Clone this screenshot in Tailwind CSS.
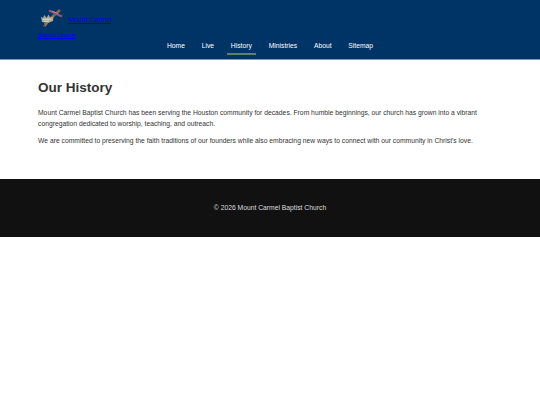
<!DOCTYPE html>
<html lang="en">
<head>
  <meta charset="UTF-8">
  <meta name="viewport" content="width=device-width, initial-scale=1.0">
  <title>Our History - Mount Carmel Baptist Church</title>
  <script src="https://cdn.jsdelivr.net/npm/@tailwindcss/browser@4"></script>
</head>
<body class="bg-white font-['Liberation_Sans',Arial,sans-serif] text-[6.75px] leading-[11px] text-[#333333]">
  <!-- Header -->
  <header class="h-[60px] border-b border-[#7f99b2] bg-[#003366]">
    <div class="mx-auto w-[464px] pt-[6px]">
      <a href="#" class="block h-[33px] text-[#0000ee]">
        <span class="flex h-[25px] items-center">
          <svg class="h-[25px] w-[30px] shrink-0" viewBox="0 0 30 25" fill="none">
            <path d="M5.5 20.5 13 12.5" stroke="#6e4a3c" stroke-width="2"/>
            <path d="M13 12 22 4" stroke="#8d6452" stroke-width="2.4"/>
            <path d="M11 4.5 24 10.5" stroke="#90577a" stroke-width="2.4"/>
            <path d="M14 5 20 7.5" stroke="#b98a92" stroke-width="1"/>
            <path d="M3 10.5 5 12 6.5 9 8.5 12 10.5 8.5 12 11.5 15.5 10.5 15 15 10 17 4 16Z" fill="#a9ab98"/>
            <path d="M5 13.5 13.5 13M6 15.5 11 15" stroke="#dedac0" stroke-width="1"/>
            <path d="M6 17 10.5 16.5 7.5 21Z" fill="#88745a"/>
          </svg>
          <span class="pt-[1px] text-[7px] tracking-[-0.05px] underline decoration-[0.5px]">Mount Carmel</span>
        </span>
        <span class="block text-[5.6px] leading-[9px] underline decoration-[0.5px]">Baptist Church</span>
      </a>
      <nav class="flex justify-center gap-[8.4px] text-white">
        <a href="#" class="h-[15.5px] px-[4.2px] pt-[0.8px]">Home</a>
        <a href="#" class="h-[15.5px] px-[4.2px] pt-[0.8px]">Live</a>
        <a href="#" class="h-[15.5px] border-b-2 border-[#5d8265] px-[4.2px] pt-[0.8px]">History</a>
        <a href="#" class="h-[15.5px] px-[4.2px] pt-[0.8px]">Ministries</a>
        <a href="#" class="h-[15.5px] px-[4.2px] pt-[0.8px]">About</a>
        <a href="#" class="h-[15.5px] px-[4.2px] pt-[0.8px]">Sitemap</a>
      </nav>
    </div>
  </header>

  <!-- Main content -->
  <main class="mx-auto h-[119px] w-[464px] pt-[17px]">
    <h1 class="text-[13.5px] leading-[22px] font-bold">Our History</h1>
    <p class="mt-[7.75px]">Mount Carmel Baptist Church has been serving the Houston community for decades. From humble beginnings, our church has grown into a vibrant congregation dedicated to worship, teaching, and outreach.</p>
    <p class="mt-[6.25px]">We are committed to preserving the faith traditions of our founders while also embracing new ways to connect with our community in Christ's love.</p>
  </main>

  <!-- Footer -->
  <footer class="flex h-[58px] items-center justify-center bg-[#111111] pb-[1.5px] text-[#dddddd]">
    <p>© 2026 Mount Carmel Baptist Church</p>
  </footer>
</body>
</html>
